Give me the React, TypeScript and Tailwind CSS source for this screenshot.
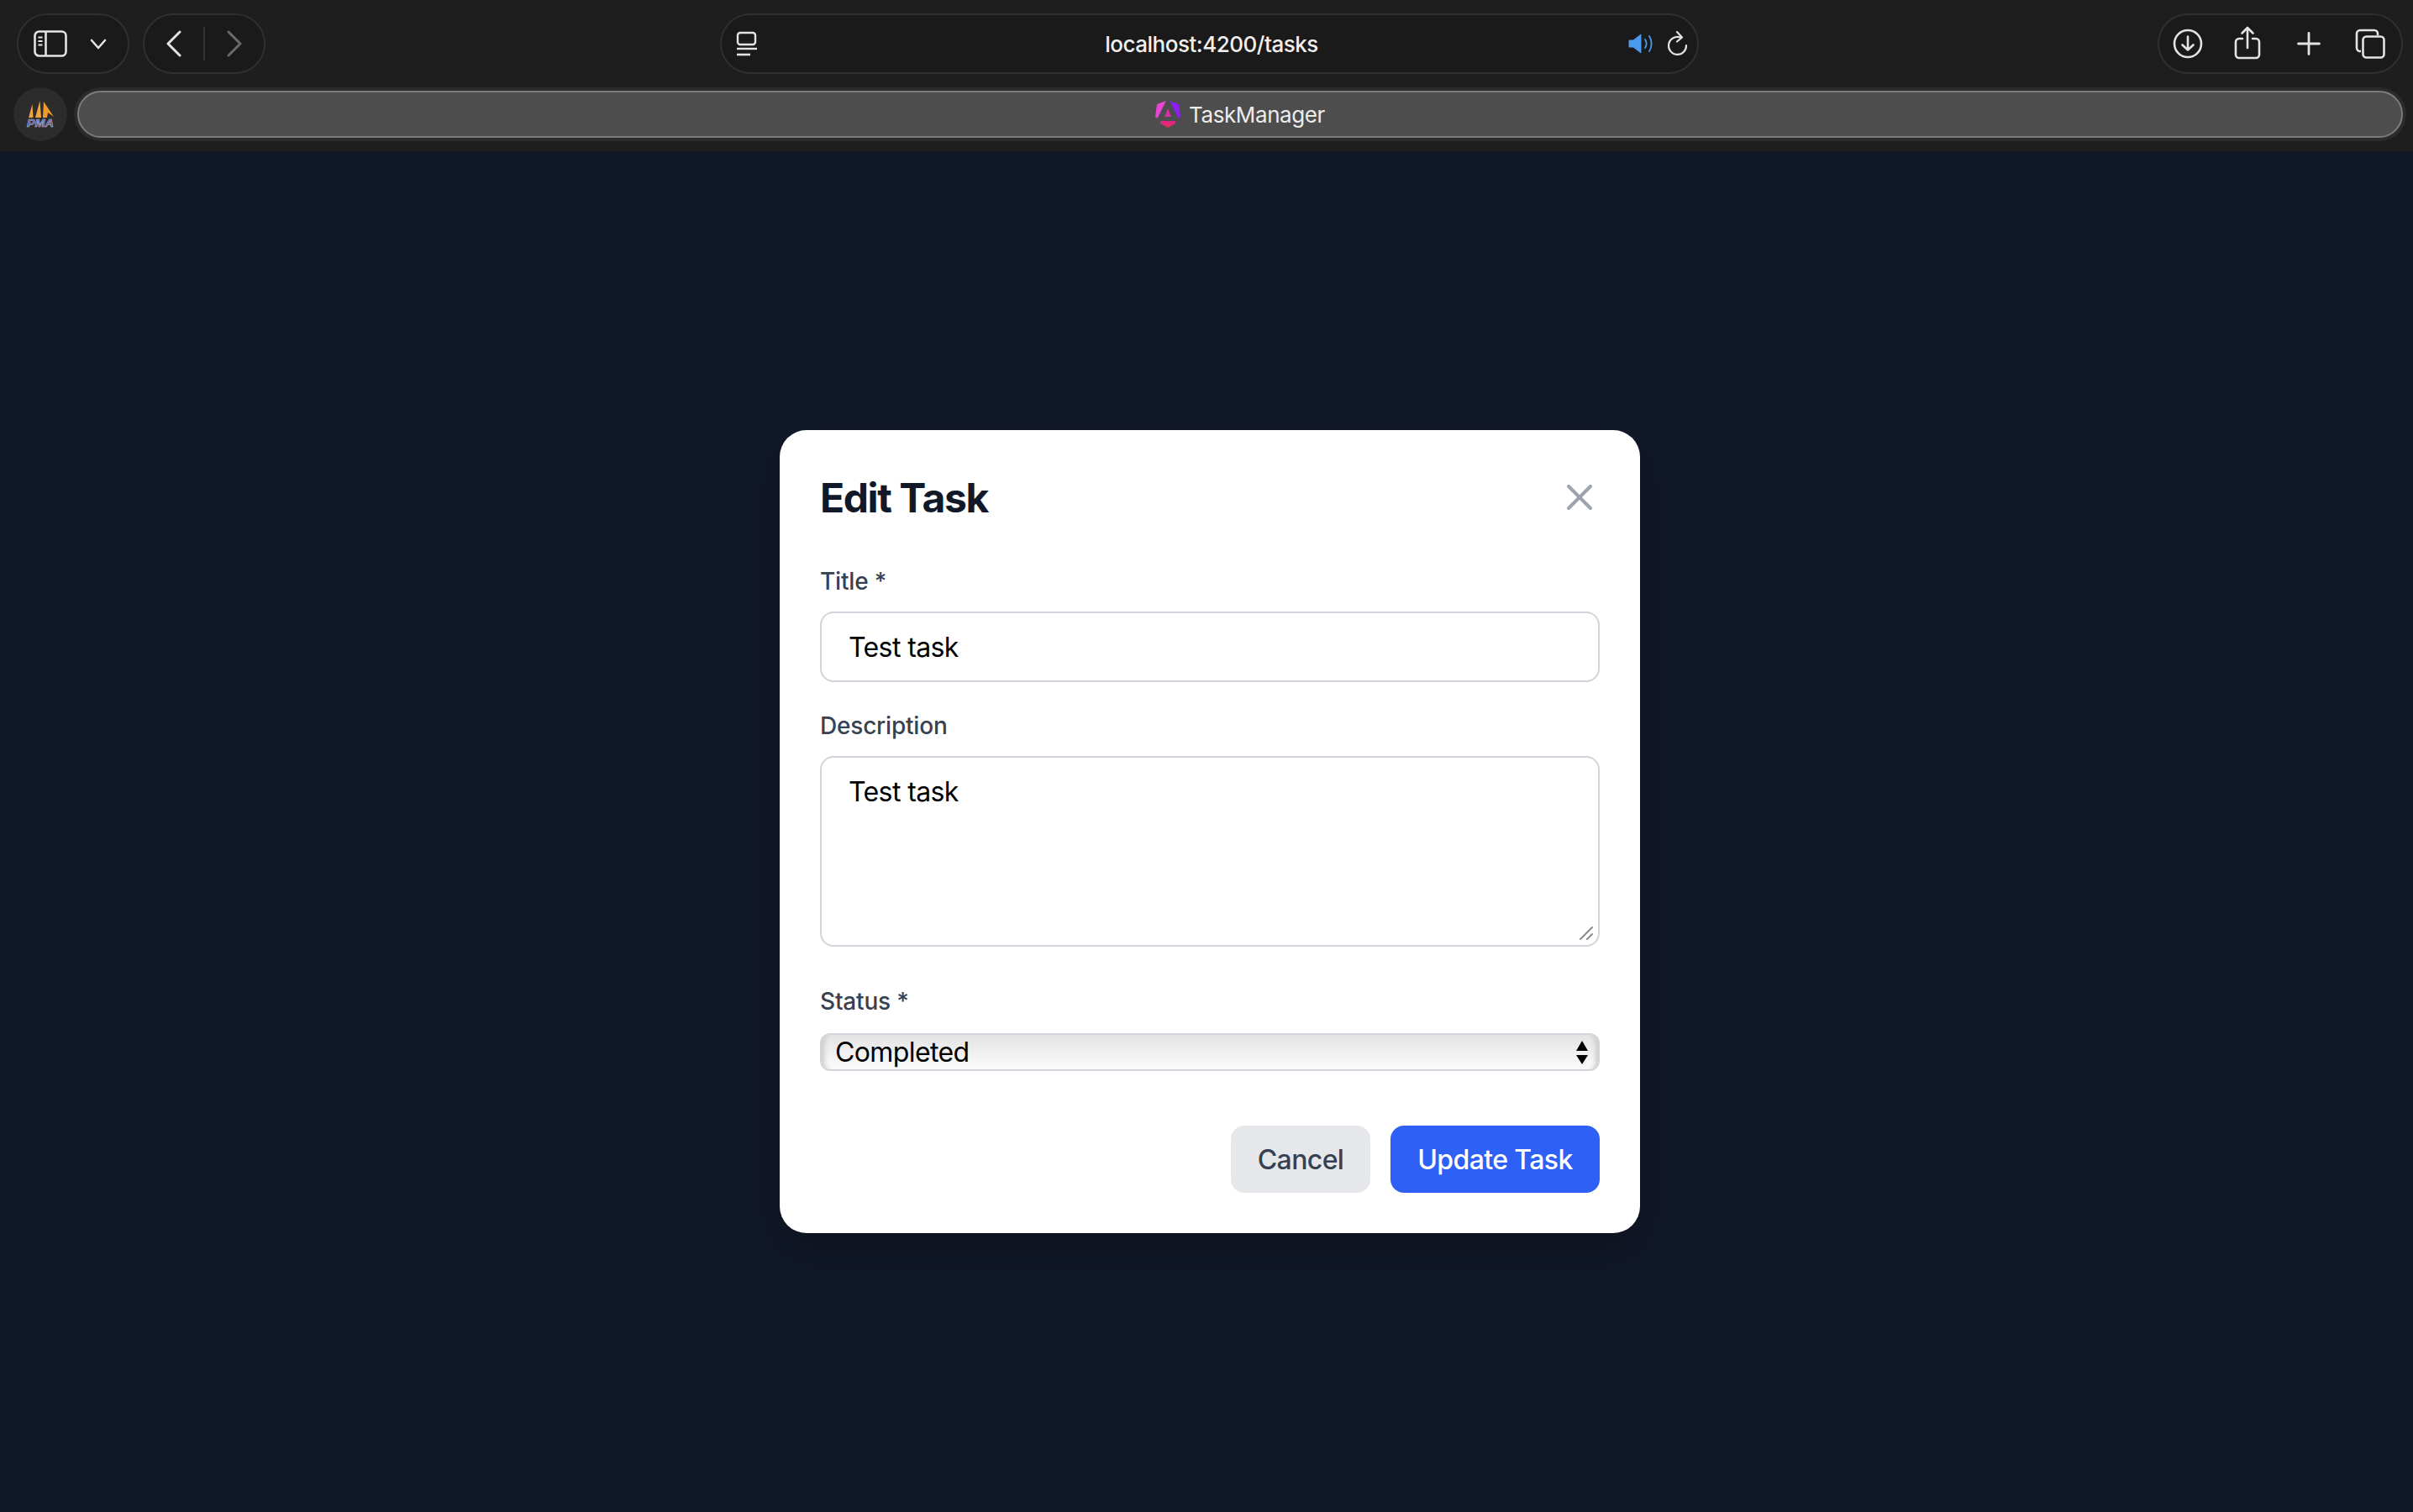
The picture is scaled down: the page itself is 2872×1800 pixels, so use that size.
const ICON = "#e3e3e3";

function Pill({ className, children }: { className: string; children?: React.ReactNode }) {
  return (
    <div className={`h-[72px] flex items-center rounded-full border-2 border-[#2f2f2f] bg-[#1a1a1a] ${className}`}>
      {children}
    </div>
  );
}

function SidebarIcon() {
  return (
    <svg width="40" height="32" viewBox="0 0 40 32" fill="none" stroke={ICON} strokeWidth="2.6">
      <rect x="1.5" y="1.5" width="37" height="29" rx="5" />
      <path d="M14.5 2v28" />
      <path d="M5.5 8.5h5M5.5 13h5M5.5 17.5h5" strokeWidth="2" />
    </svg>
  );
}

function PmaLogo() {
  return (
    <svg className="mt-[5px]" width="34" height="38" viewBox="0 0 34 38">
      <path d="M3 20 L7.500 4 L8.500 20Z" fill="#f2a33c" />
      <path d="M11 20 L16.500 0 L18 20Z" fill="#f2a33c" />
      <path d="M20 20 L21 1 L33 19 L26 14 L25 20Z" fill="#ee9a2e" />
      <text x="17" y="31" textAnchor="middle" textLength="32" lengthAdjust="spacingAndGlyphs" fontFamily="Liberation Sans, sans-serif" fontSize="13" fontWeight="700" fontStyle="italic" fill="#4a4f8c" stroke="#c9cbe6" strokeWidth="0.5">PMA</text>
    </svg>
  );
}

function AngularLogo() {
  return (
    <svg width="30" height="32" viewBox="0 0 30 32">
      <defs>
        <linearGradient id="ngBottom" x1="0" y1="0" x2="0" y2="1">
          <stop offset="0" stopColor="#d9268f" />
          <stop offset="1" stopColor="#ee2c50" />
        </linearGradient>
      </defs>
      <path d="M13 0 L2 4 L0 19 L2.5 21 Z" fill="#e945d4" />
      <path d="M17 0 L28 4 L30 19 L27.5 21 Z" fill="#8c1ef4" />
      <path d="M15 9 L19 19 H11 Z" fill="#d42fa6" />
      <path d="M6 24 H24 V27 L15 32 L6 27 Z" fill="url(#ngBottom)" />
    </svg>
  );
}

function Toolbar() {
  return (
    <header className="h-[180px] shrink-0 bg-[#1e1e1e] font-['Inter',sans-serif]">
      <div className="h-[104px] flex items-start pt-4 pl-5 pr-3">
        <Pill className="w-[134px] pl-[18px]">
          <SidebarIcon />
          <svg className="ml-[27px]" width="20" height="13" viewBox="0 0 20 13" fill="none" stroke={ICON} strokeWidth="2.6" strokeLinecap="round" strokeLinejoin="round">
            <path d="M2 2l8 9 8-9" />
          </svg>
        </Pill>
        <Pill className="w-[146px] ml-4 pl-[26px] relative">
          <svg width="18" height="32" viewBox="0 0 18 32" fill="none" stroke={ICON} strokeWidth="3" strokeLinecap="round" strokeLinejoin="round">
            <path d="M16 2L2 16l14 14" />
          </svg>
          <div className="w-0.5 h-10 bg-[#333] ml-[26px]" />
          <svg className="ml-[26px]" width="18" height="32" viewBox="0 0 18 32" fill="none" stroke="#6a6a6a" strokeWidth="3" strokeLinecap="round" strokeLinejoin="round">
            <path d="M2 2l14 14L2 30" />
          </svg>
        </Pill>
        <Pill className="w-[1165px] ml-[541px] pl-[17px] pr-[11px] justify-between">
          <svg width="26" height="30" viewBox="0 0 26 30" fill="none" stroke={ICON}>
            <rect x="2" y="2" width="21" height="14" rx="3" strokeWidth="2.4" />
            <path d="M1 21h24" strokeWidth="2.4" />
            <path d="M1 28h16" strokeWidth="2.6" />
          </svg>
          <span className="text-[26px] font-medium text-[#f0f0f0] tracking-[-0.5px] ml-[44px]">localhost:4200/tasks</span>
          <div className="flex items-center gap-[17px]">
            <svg width="30" height="24" viewBox="0 0 30 24" fill="none" stroke="#4a9bf0">
              <path d="M1 8h5l9-7v22l-9-7H1z" fill="#4a9bf0" strokeWidth="1" />
              <path d="M20 7c2 3 2 7 0 10" strokeWidth="1.8" strokeLinecap="round" />
              <path d="M25 3c3.500 5 3.500 13 0 18" strokeWidth="1.8" strokeLinecap="round" />
            </svg>
            <svg width="24" height="30" viewBox="0 0 24 30" fill="none" stroke={ICON} strokeWidth="2.2" strokeLinecap="round" strokeLinejoin="round">
              <path d="M15 7.500A10.500 10.500 0 1 0 22 17" />
              <path d="M11 1l6 6.500-6 5" />
            </svg>
          </div>
        </Pill>
        <Pill className="w-[292px] ml-auto pl-[16px]">
          <svg width="36" height="36" viewBox="0 0 36 36" fill="none" stroke={ICON} strokeWidth="2.6" strokeLinecap="round" strokeLinejoin="round">
            <circle cx="18" cy="18" r="16" />
            <path d="M18 9.500v16M11.500 19.500l6.500 6 6.500-6" />
          </svg>
          <svg className="ml-[37px] mb-[3px]" width="32" height="40" viewBox="0 0 32 40" fill="none" stroke={ICON} strokeWidth="2.6" strokeLinecap="round" strokeLinejoin="round">
            <path d="M10 15H6a4 4 0 0 0-4 4v15a4 4 0 0 0 4 4h20a4 4 0 0 0 4-4V19a4 4 0 0 0-4-4h-4" />
            <path d="M16 26V2M9.500 8.500L16 2l6.500 6.500" />
          </svg>
          <svg className="ml-[43px]" width="28" height="28" viewBox="0 0 28 28" fill="none" stroke={ICON} strokeWidth="2.8" strokeLinecap="round">
            <path d="M14 1.500v25M1.500 14h25" />
          </svg>
          <svg className="ml-[41px]" width="36" height="36" viewBox="0 0 36 36" fill="none" stroke={ICON} strokeWidth="2.6" strokeLinejoin="round">
            <path d="M7 27H6a4 4 0 0 1-4-4V6a4 4 0 0 1 4-4h17a4 4 0 0 1 4 4v2" />
            <rect x="9.500" y="9.500" width="25" height="25" rx="4" />
          </svg>
        </Pill>
      </div>
      <div className="h-16 flex items-center pl-4 pr-2">
        <div className="size-16 shrink-0 rounded-full bg-[#2c2c2c] flex items-center justify-center">
          <PmaLogo />
        </div>
        <div className="flex-1 h-16 ml-2 p-1 rounded-full bg-[#2b2b2b]">
          <div className="h-14 rounded-full bg-[#4d4d4d] border-2 border-[#7c7c7c] flex items-center justify-center gap-[10px]">
            <AngularLogo />
            <span className="text-[26px] text-[#ececec] tracking-[-0.4px]">TaskManager</span>
          </div>
        </div>
      </div>
    </header>
  );
}

const labelClass = "block text-[28px] leading-10 font-medium text-[#374151] tracking-[-0.2px] mb-4";
const fieldClass = "w-full rounded-2xl border-2 border-[#d1d5db] bg-white px-8 text-[32px] tracking-[-0.6px] text-black outline-none";

function EditTaskModal() {
  return (
    <div className="w-[1024px] rounded-[32px] bg-white p-12 shadow-[0_20px_50px_rgba(0,0,0,0.25)] font-['Inter',sans-serif]">
      <div className="flex items-center justify-between mb-12">
        <h2 className="h-16 text-[48px] leading-[66px] font-bold text-[#111827] tracking-[-1.4px]">Edit Task</h2>
        <svg className="mr-[9px] mb-px" width="30" height="30" viewBox="0 0 30 30" fill="none" stroke="#9ca3af" strokeWidth="4" strokeLinecap="round">
          <path d="M2 2l26 26M28 2L2 28" />
        </svg>
      </div>

      <form className="flex flex-col">
        <label className={labelClass}>Title *</label>
        <input className={`${fieldClass} h-[84px] mb-8`} defaultValue="Test task" readOnly />

        <label className={labelClass}>Description</label>
        <div className="relative h-[227px] mb-[45px]">
          <textarea className={`${fieldClass} h-full pt-[21px] pb-5 leading-10 resize-none`} defaultValue="Test task" readOnly />
          <svg className="absolute right-[8px] bottom-[8px]" width="16" height="16" viewBox="0 0 16 16" fill="none" stroke="#8a8a8a" strokeWidth="2" strokeLinecap="round">
            <path d="M1 15L15 1M9 15l6-6" />
          </svg>
        </div>

        <label className={`${labelClass} mb-[18px]`}>Status *</label>
        <div className="relative mb-[65px]">
          <select className="w-full h-[45px] appearance-none rounded-xl border-2 border-[#d1d5db] bg-linear-to-b from-[#e4e4e4] to-[#fbfbfb] pl-4 text-[32px] leading-[41px] tracking-[-0.6px] text-black outline-none shadow-[inset_8px_0_6px_-6px_#c4c4c4,inset_-8px_0_6px_-6px_#c4c4c4]" defaultValue="completed">
            <option value="completed">Completed</option>
          </select>
          <svg className="absolute right-[14px] top-[9px] pointer-events-none" width="14" height="28" viewBox="0 0 14 28" fill="#000">
            <path d="M7 0l7 12H0zM0 17h14l-7 11z" />
          </svg>
        </div>

        <div className="flex justify-end gap-6">
          <button type="button" className="h-20 w-[166px] pt-0.5 rounded-2xl bg-[#e5e7eb] text-[32px] font-medium tracking-[-0.6px] text-[#374151]">Cancel</button>
          <button type="button" className="h-20 w-[249px] pt-0.5 rounded-2xl bg-[#2f60f5] text-[32px] font-medium tracking-[-0.6px] text-white">Update Task</button>
        </div>
      </form>
    </div>
  );
}

export default function App() {
  return (
    <div className="h-screen flex flex-col bg-[#111828] overflow-hidden">
      <Toolbar />
      <main className="flex-1 flex items-center justify-center pl-2">
        <EditTaskModal />
      </main>
    </div>
  );
}
